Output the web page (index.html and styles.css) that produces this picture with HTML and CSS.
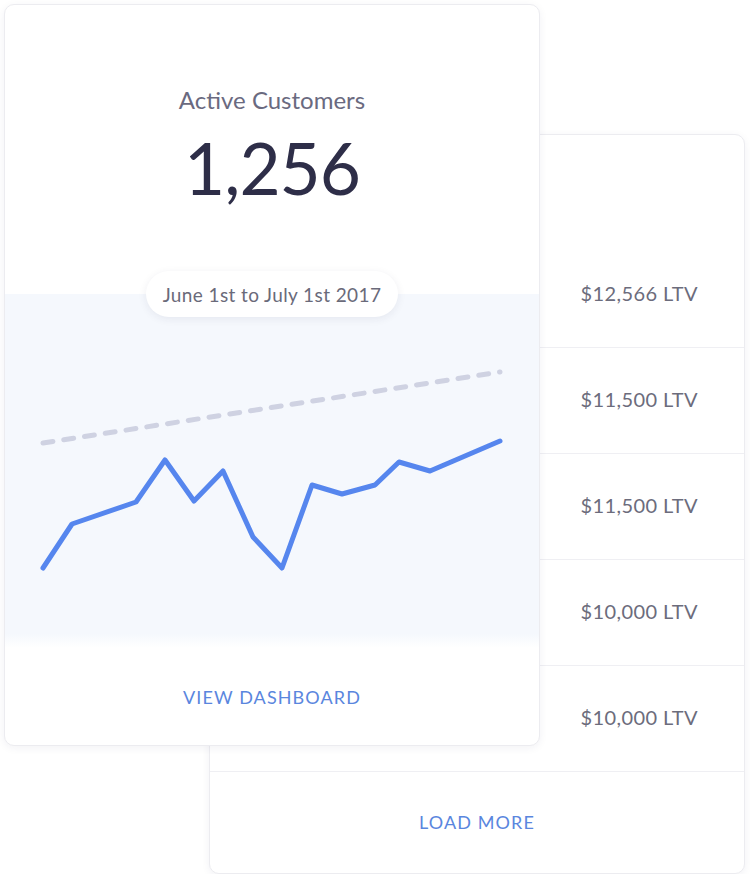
FILE: index.html
```html
<!DOCTYPE html>
<html>
<head>
    <title>Active Customers</title>
    <link rel="stylesheet" href="styles.css">
</head>
<body>
    <div class="stack">
        <div class="card card-ltv">
            <div class="ltv-head"></div>
            <div class="ltv-row first">$12,566 LTV</div>
            <div class="ltv-row">$11,500 LTV</div>
            <div class="ltv-row">$11,500 LTV</div>
            <div class="ltv-row">$10,000 LTV</div>
            <div class="ltv-row">$10,000 LTV</div>
            <div class="card-foot load-foot"><a href="#" class="link">LOAD MORE</a></div>
        </div>

        <div class="card card-stats">
            <div class="stats-head">
                <div class="stats-label">Active Customers</div>
                <div class="stats-value">1,256</div>
            </div>
            <div class="chart">
                <div class="range-pill">June 1st to July 1st 2017</div>
                <svg class="chart-svg" viewBox="0 0 534 354" width="534" height="354">
                    <!-- trend line -->
                    <polyline class="trend" points="38,149 495,78"/>
                    <!-- daily customers -->
                    <polyline class="series" points="38,274 67,230 131,208 160,166 189,207 218,177 248,243 277,274 307,191 337,200 370,191 394,168 425,177 495,147"/>
                </svg>
            </div>
            <div class="card-foot stats-foot"><a href="#" class="link">VIEW DASHBOARD</a></div>
        </div>
    </div>
</body>
</html>
```

FILE: styles.css
```css
body {margin: 0; background: #fff; font-family: Lato, "Open Sans", sans-serif;}
.stack {display: grid; padding: 4px 0 0 4px;}
.card {grid-area: 1 / 1; width: 536px; box-sizing: border-box; background: #fff; border: 1px solid #ececf0; border-radius: 10px; box-shadow: 0 2px 8px rgba(40, 40, 80, 0.06); overflow: hidden;}

.card-ltv {margin: 130px 0 0 205px; height: 740px; display: flex; flex-direction: column;}
.ltv-head {height: 106px;}
.ltv-row {height: 106px; box-sizing: border-box; border-top: 1px solid #efeff3; display: flex; align-items: center; justify-content: flex-end; padding: 0 46px 3px 0; font-size: 20px; letter-spacing: 0.4px; color: #6c6c7c;}
.ltv-row.first {border-top: none;}
.load-foot {flex: 1; border-top: 1px solid #efeff3; padding-bottom: 2px;}

.card-stats {position: relative; z-index: 1; height: 742px; display: flex; flex-direction: column;}
.stats-head {height: 289px; text-align: center; padding-top: 81px; box-sizing: border-box;}
.stats-label {font-size: 24px; line-height: 28px; color: #6a6a80;}
.stats-value {font-size: 71px; line-height: 71px; letter-spacing: -1px; margin-top: 18px; color: #2e2e48;}

.chart {height: 354px; background: linear-gradient(#f5f8fd 0, #f5f8fd 96%, #fff 100%); display: flex; flex-direction: column; align-items: center;}
.range-pill {margin-top: -23px; height: 46px; padding: 0 17px; border-radius: 23px; background: #fff; box-shadow: 0 2px 8px rgba(40, 40, 80, 0.08); display: flex; align-items: center; font-size: 19px; letter-spacing: 0.4px; color: #6a6a7a;}
.chart-svg {display: block; margin-top: -23px;}
.trend {fill: none; stroke: #cfd2e2; stroke-width: 5; stroke-linecap: round; stroke-dasharray: 10 11;}
.series {fill: none; stroke: #5686ee; stroke-width: 5; stroke-linecap: round; stroke-linejoin: round;}

.card-foot {display: flex; align-items: center; justify-content: center;}
.stats-foot {flex: 1;}
.link {color: #5a86de; text-decoration: none; font-size: 18px; letter-spacing: 1.1px;}
```
